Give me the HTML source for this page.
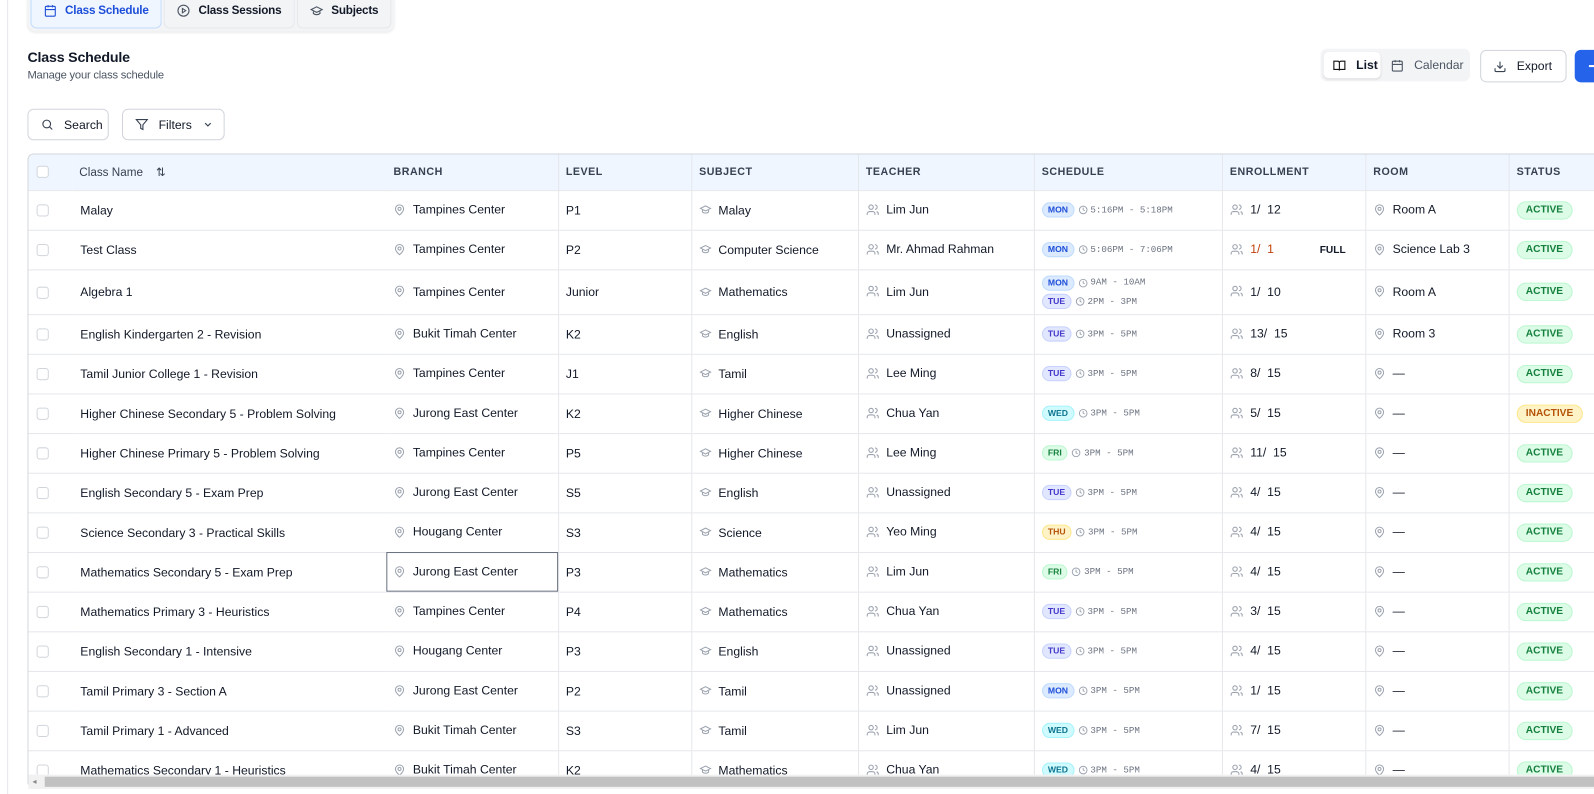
<!DOCTYPE html>
<html><head><meta charset="utf-8"><style>
*{box-sizing:border-box;margin:0;padding:0}
html{overflow:hidden;width:1594px;height:794px}
body{width:1594px;height:794px;overflow:hidden;background:#fff;font-family:"Liberation Sans",Arial,sans-serif;color:#111827;position:relative}
#root{position:absolute;left:0;top:0;width:1568px;height:781px;transform:scale(1.0166);transform-origin:0 0;overflow:hidden}
svg{flex-shrink:0}
.lb{position:absolute;left:7px;top:0;width:1px;height:794px;background:#e5e7eb}
.tabs{position:absolute;left:27px;top:-6px;height:37px;background:#f3f4f6;border-radius:8px;padding:0 3px;display:flex;gap:2px;box-shadow:0 1px 2px rgba(0,0,0,.08)}
.tab{height:34px;display:flex;align-items:center;gap:8px;padding:0 12px;font-size:11.5px;font-weight:bold;letter-spacing:-.2px;background:#f3f4f6;border-radius:0 0 6px 6px;border:1px solid #e5e7eb;border-top:none}
.tab.on{background:#eff6ff;color:#1d4ed8;border-color:#bfdbfe}
h1{position:absolute;left:27px;top:48px;font-size:14px;font-weight:bold;letter-spacing:-.2px}
.sub{position:absolute;left:27px;top:68px;font-size:11px;color:#4b5563;letter-spacing:-.2px}
.btn{position:absolute;height:32px;border:1px solid #d1d5db;border-radius:6px;display:flex;align-items:center;gap:10px;padding:0 12px;font-size:12px;background:#fff}
.seg{position:absolute;left:1299px;top:48px;width:147px;height:32px;background:#f3f4f6;border-radius:6px}
.wrap{position:absolute;left:27px;top:151px;width:1541px;height:624px;border:1px solid #d1d5db;border-right:none;border-radius:6px 0 0 6px;overflow:hidden}
table{border-collapse:collapse;table-layout:fixed;width:1580px;font-size:12px}
th{background:#eff6ff;height:35px;text-align:left;font-size:10.5px;font-weight:bold;color:#374151;letter-spacing:.5px;padding-left:7px;border-right:1px solid #e5e7eb;border-bottom:1px solid #e5e7eb}
td{height:39px;border-bottom:1px solid #e5e7eb;border-right:1px solid #e5e7eb;padding-left:7px;white-space:nowrap;color:#111827;vertical-align:middle}
td.n,th.n,td.c,th.c{border-right:none}
td.c,th.c{padding-left:8px}
.cb{display:inline-block;width:12px;height:12px;border:1px solid #d1d5db;border-radius:3px;background:#fff;vertical-align:middle}
.ic{display:inline-block;vertical-align:middle;margin-right:7px;position:relative;top:-1px}
.bd{display:inline-block;font-size:8.5px;line-height:11px;font-weight:bold;padding:1px 5px;border-radius:8px;margin-right:4px;vertical-align:middle}
.MON{background:#dbeafe;color:#1d4ed8;border:1px solid #bfdbfe}.TUE{background:#e0e7ff;color:#4338ca;border:1px solid #c7d2fe}.WED{background:#cffafe;color:#0e7490;border:1px solid #a5f3fc}.THU{background:#fef3c7;color:#b45309;border:1px solid #fde68a}.FRI{background:#dcfce7;color:#15803d;border:1px solid #bbf7d0}
.tm{font-family:"Liberation Mono",monospace;font-size:9px;color:#6b7280;vertical-align:middle}
.st{display:inline-block;font-size:10px;line-height:12px;font-weight:bold;padding:2px 8px;border-radius:9px;background:#dcfce7;color:#15803d;border:1px solid #bbf7d0}
.st.in{background:#fef3c7;color:#b45309;border-color:#fde68a}
.sb{position:absolute;left:28px;top:762px;width:1540px;height:14px;background:#f1f1f1}
.sb div{position:absolute;left:16px;top:2px;right:0;height:10px;background:#c1c1c1}
</style></head><body><div id="root">
<div class="lb"></div>
<div class="tabs">
<div class="tab on"><svg width="13" height="13" viewBox="0 0 24 24" fill="none" stroke="#1d4ed8" stroke-width="2"><rect x="3" y="4" width="18" height="18" rx="2"/><path d="M16 2v4M8 2v4M3 10h18"/></svg>Class Schedule</div>
<div class="tab"><svg width="13" height="13" viewBox="0 0 24 24" fill="none" stroke="#4b5563" stroke-width="2"><circle cx="12" cy="12" r="10"/><path d="M10 8l6 4-6 4z"/></svg>Class Sessions</div>
<div class="tab"><svg width="13" height="13" viewBox="0 0 24 24" fill="none" stroke="#4b5563" stroke-width="2"><path d="M22 10L12 5 2 10l10 5 10-5zM6 12v5c3 3 9 3 12 0v-5"/></svg>Subjects</div>
</div>
<h1>Class Schedule</h1>
<div class="sub">Manage your class schedule</div>
<div class="seg"><div style="position:absolute;left:3px;top:3px;width:56px;height:26px;background:#fff;border-radius:5px;box-shadow:0 1px 2px rgba(0,0,0,.1);display:flex;align-items:center;gap:10px;padding-left:9px;font-size:12px;font-weight:bold"><svg width="13" height="13" viewBox="0 0 24 24" fill="none" stroke="#111" stroke-width="2"><path d="M2 4h7a3 3 0 013 3v14a2 2 0 00-2-2H2zM22 4h-7a3 3 0 00-3 3v14a2 2 0 012-2h8z"/></svg>List</div>
<div style="position:absolute;left:69px;top:3px;height:26px;display:flex;align-items:center;gap:10px;font-size:12px;color:#4b5563"><svg width="13" height="13" viewBox="0 0 24 24" fill="none" stroke="#4b5563" stroke-width="2"><rect x="3" y="4" width="18" height="18" rx="2"/><path d="M16 2v4M8 2v4M3 10h18"/></svg>Calendar</div></div>
<div class="btn" style="left:1456px;top:49px;width:85px"><svg width="13" height="13" viewBox="0 0 24 24" fill="none" stroke="#374151" stroke-width="2"><path d="M21 15v4a2 2 0 01-2 2H5a2 2 0 01-2-2v-4M7 10l5 5 5-5M12 15V3"/></svg>Export</div>
<div style="position:absolute;left:1549px;top:49px;width:45px;height:32px;background:#2563eb;border-radius:6px 0 0 6px"><div style="position:absolute;left:14px;top:15px;width:8px;height:1.5px;background:#fff"></div></div>
<div class="btn" style="left:27px;top:107px;width:80px;height:31px"><svg width="13" height="13" viewBox="0 0 24 24" fill="none" stroke="#374151" stroke-width="2"><circle cx="11" cy="11" r="7"/><path d="M21 21l-5-5"/></svg>Search</div>
<div class="btn" style="left:120px;top:107px;width:101px;height:31px"><svg width="13" height="13" viewBox="0 0 24 24" fill="none" stroke="#374151" stroke-width="2"><path d="M22 3H2l8 9.5V19l4 2v-8.5z"/></svg>Filters<svg width="11" height="11" viewBox="0 0 24 24" fill="none" stroke="#374151" stroke-width="2.5"><path d="M6 9l6 6 6-6"/></svg></div>

<div class="wrap"><table>
<colgroup><col style="width:43px"><col style="width:309px"><col style="width:169px"><col style="width:131px"><col style="width:164px"><col style="width:173px"><col style="width:185px"><col style="width:141px"><col style="width:141px"><col style="width:123px"></colgroup>
<tr><th class="c"><span class="cb"></span></th><th class="n" style="font-size:11.5px;font-weight:normal;letter-spacing:0;color:#374151">Class Name &nbsp;&nbsp;&nbsp;⇅</th><th>BRANCH</th><th>LEVEL</th><th>SUBJECT</th><th>TEACHER</th><th>SCHEDULE</th><th>ENROLLMENT</th><th>ROOM</th><th>STATUS</th></tr>
<tbody id="tb"></tbody>
</table></div>
<div class="sb"><div></div><span style="position:absolute;left:4px;top:2px;font-size:8px;color:#888">◂</span></div>
</div>
<script>
var pin='<svg class="ic" width="12" height="13" viewBox="0 0 24 24" fill="none" stroke="#9ca3af" stroke-width="2"><path d="M20 10c0 6-8 12-8 12S4 16 4 10a8 8 0 0116 0z"/><circle cx="12" cy="10" r="3"/></svg>';
var cap='<svg class="ic" width="12" height="12" viewBox="0 0 24 24" fill="none" stroke="#9ca3af" stroke-width="2"><path d="M22 10L12 5 2 10l10 5 10-5zM6 12v5c3 3 9 3 12 0v-5"/></svg>';
var ppl='<svg class="ic" width="13" height="13" viewBox="0 0 24 24" fill="none" stroke="#9ca3af" stroke-width="2"><circle cx="9" cy="7" r="4"/><path d="M2 21v-2a4 4 0 014-4h6a4 4 0 014 4v2M16 3a4 4 0 010 8M22 21v-2a4 4 0 00-3-3.8"/></svg>';
var clk='<svg width="9" height="9" viewBox="0 0 24 24" fill="none" stroke="#9ca3af" stroke-width="2.5" style="vertical-align:middle;margin-right:3px"><circle cx="12" cy="12" r="10"/><path d="M12 6v6l4 2"/></svg>';
var R=[
["Malay","Tampines Center","P1","Malay","Lim Jun",[["MON","5:16PM - 5:18PM"]],"1/ 12","Room A",0],
["Test Class","Tampines Center","P2","Computer Science","Mr. Ahmad Rahman",[["MON","5:06PM - 7:06PM"]],"F","Science Lab 3",0],
["Algebra 1","Tampines Center","Junior","Mathematics","Lim Jun",[["MON","9AM - 10AM"],["TUE","2PM - 3PM"]],"1/ 10","Room A",0],
["English Kindergarten 2 - Revision","Bukit Timah Center","K2","English","Unassigned",[["TUE","3PM - 5PM"]],"13/ 15","Room 3",0],
["Tamil Junior College 1 - Revision","Tampines Center","J1","Tamil","Lee Ming",[["TUE","3PM - 5PM"]],"8/ 15","—",0],
["Higher Chinese Secondary 5 - Problem Solving","Jurong East Center","K2","Higher Chinese","Chua Yan",[["WED","3PM - 5PM"]],"5/ 15","—",1],
["Higher Chinese Primary 5 - Problem Solving","Tampines Center","P5","Higher Chinese","Lee Ming",[["FRI","3PM - 5PM"]],"11/ 15","—",0],
["English Secondary 5 - Exam Prep","Jurong East Center","S5","English","Unassigned",[["TUE","3PM - 5PM"]],"4/ 15","—",0],
["Science Secondary 3 - Practical Skills","Hougang Center","S3","Science","Yeo Ming",[["THU","3PM - 5PM"]],"4/ 15","—",0],
["Mathematics Secondary 5 - Exam Prep","Jurong East Center","P3","Mathematics","Lim Jun",[["FRI","3PM - 5PM"]],"4/ 15","—",0],
["Mathematics Primary 3 - Heuristics","Tampines Center","P4","Mathematics","Chua Yan",[["TUE","3PM - 5PM"]],"3/ 15","—",0],
["English Secondary 1 - Intensive","Hougang Center","P3","English","Unassigned",[["TUE","3PM - 5PM"]],"4/ 15","—",0],
["Tamil Primary 3 - Section A","Jurong East Center","P2","Tamil","Unassigned",[["MON","3PM - 5PM"]],"1/ 15","—",0],
["Tamil Primary 1 - Advanced","Bukit Timah Center","S3","Tamil","Lim Jun",[["WED","3PM - 5PM"]],"7/ 15","—",0],
["Mathematics Secondary 1 - Heuristics","Bukit Timah Center","K2","Mathematics","Chua Yan",[["WED","3PM - 5PM"]],"4/ 15","—",0]];
var h='';
R.forEach(function(r,i){
var s=r[5].map(function(x){return '<div style="line-height:18px"><span class="bd '+x[0]+'">'+x[0]+'</span>'+clk+'<span class="tm">'+x[1]+'</span></div>'}).join('');
var en=r[6]=="F"?'<span style="color:#c2410c">1/ &nbsp;1</span><span style="margin-left:45px;font-size:10px;font-weight:bold">FULL</span>':r[6].replace('/ ','/ &nbsp;');
h+='<tr style="height:'+(i==2?44:39)+'px"><td class="c"><span class="cb"></span></td><td class="n" style="padding-left:8px">'+r[0]+'</td><td'+(i==9?' style="outline:1px solid #6b7280;outline-offset:-1px"':'')+'>'+pin+r[1]+'</td><td>'+r[2]+'</td><td>'+cap+r[3]+'</td><td>'+ppl+r[4]+'</td><td>'+s+'</td><td>'+ppl+en+'</td><td>'+pin+r[7]+'</td><td><span class="st'+(r[8]?' in':'')+'">'+(r[8]?'INACTIVE':'ACTIVE')+'</span></td></tr>';
});
document.getElementById('tb').innerHTML=h;
</script>
</body></html>
